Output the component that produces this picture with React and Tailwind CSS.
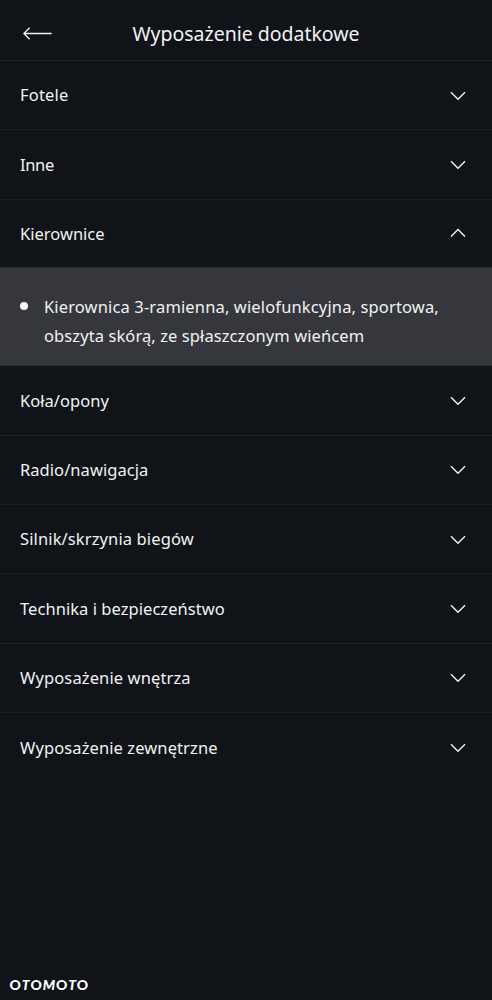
import React, { useState } from "react";

const sections = [
  { title: "Fotele", tracking: "tracking-[0.2px]" },
  { title: "Inne", tracking: "tracking-[-0.35px]" },
  {
    title: "Kierownice",
    tracking: "tracking-[0px]",
    items: [["Kierownica 3-ramienna, wielofunkcyjna, sportowa,", "obszyta skórą, ze spłaszczonym wieńcem"]],
  },
  { title: "Koła/opony", tracking: "tracking-[0.04px]" },
  { title: "Radio/nawigacja", tracking: "tracking-[0.05px]" },
  { title: "Silnik/skrzynia biegów", tracking: "tracking-[0.12px]" },
  { title: "Technika i bezpieczeństwo", tracking: "tracking-[0.05px]" },
  { title: "Wyposażenie wnętrza", tracking: "tracking-[0.12px]" },
  { title: "Wyposażenie zewnętrzne", tracking: "tracking-[0.1px]" },
];

function Chevron({ open }) {
  return (
    <svg
      width="16"
      height="10"
      viewBox="0 0 16 10"
      fill="none"
      stroke="currentColor"
      strokeWidth="1.4"
      className={open ? "mb-[2px] shrink-0" : "mt-[1px] shrink-0"}
    >
      <path d={open ? "M1 8.5 8 1.5 15 8.5" : "M1 1.2 8 8.2 15 1.2"} />
    </svg>
  );
}

function Section({ title, tracking, items, open, onToggle, last }) {
  return (
    <section>
      <button
        type="button"
        onClick={onToggle}
        className={`flex w-full items-center justify-between pr-[26px] pl-5 text-left ${open ? "h-[67.5px] pt-[1.5px]" : "h-[69.35px]"} ${last || open ? "" : "border-b border-[#1b1f24]"}`}
      >
        <span className={`text-[16.5px] leading-6 ${tracking}`}>{title}</span>
        <Chevron open={open} />
      </button>
      {open && items && (
        <ul className="h-[99.2px] border-y border-[#2b2d32] bg-[#36373c] pt-[24px] pl-5">
          {items.map((lines) => (
            <li key={lines[0]} className="flex text-[16.5px] leading-[29px]">
              <span className="mt-[10px] mr-[16px] size-2 shrink-0 rounded-full bg-[#f4f5f6]" />
              <span className="whitespace-nowrap">
                <span className="block tracking-[0.14px]">{lines[0]}</span>
                <span className="block tracking-[0.09px]">{lines[1]}</span>
              </span>
            </li>
          ))}
        </ul>
      )}
    </section>
  );
}

export default function App() {
  const [openTitle, setOpenTitle] = useState("Kierownice");
  return (
    <div className="flex h-[1000px] w-[492px] flex-col overflow-hidden bg-[#101318] font-['Noto_Sans',sans-serif] text-[#f0f2f3]">
      <header className="grid h-[61px] shrink-0 grid-cols-[1fr_auto_1fr] items-center border-b border-[#1b1f24] pt-[8px]">
        <svg width="30" height="14" viewBox="0 0 30 14" fill="none" stroke="currentColor" strokeWidth="1.3" className="ml-[22px]">
          <path d="M29.7 6.5H1.8M7.6 .8 1.9 6.5l5.7 5.7" />
        </svg>
        <h1 className="text-[19.5px] leading-7 tracking-[-0.01px]">Wyposażenie dodatkowe</h1>
        <span />
      </header>
      <main>
        {sections.map((s, i) => (
          <Section
            key={s.title}
            {...s}
            open={openTitle === s.title}
            last={i === sections.length - 1}
            onToggle={() => setOpenTitle(openTitle === s.title ? "" : s.title)}
          />
        ))}
      </main>
      <footer className="mt-auto pb-[6px] pl-[9.5px] font-['Lato',sans-serif] text-[14px] leading-[18px] font-black tracking-[0.85px] text-white">
        O<i>T</i>O<i>M</i>O<i>T</i>O
      </footer>
    </div>
  );
}
